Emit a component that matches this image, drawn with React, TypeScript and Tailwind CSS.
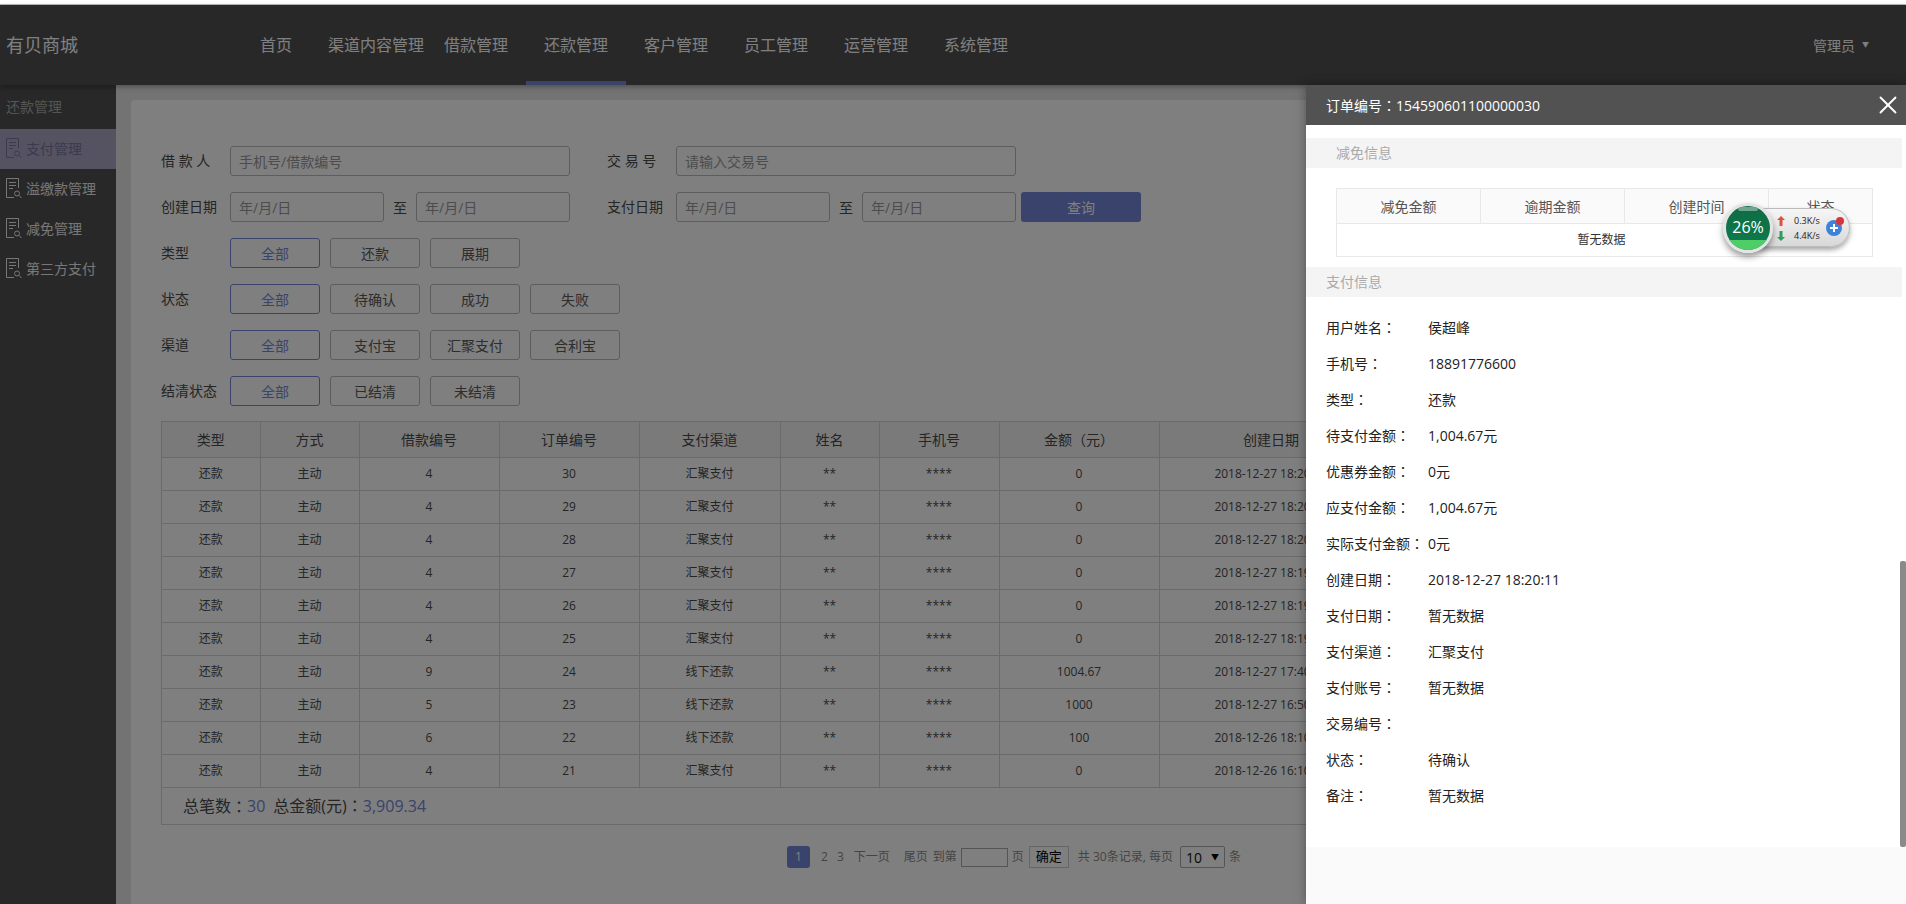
import { X } from 'lucide-react';

const font = { fontFamily: '"Open Sans", "Noto Sans CJK SC", sans-serif' };

const navItems = ['首页', '渠道内容管理', '借款管理', '还款管理', '客户管理', '员工管理', '运营管理', '系统管理'];
const sideItems = ['支付管理', '溢缴款管理', '减免管理', '第三方支付'];

const filters = [
    { label: '类型', options: ['全部', '还款', '展期'] },
    { label: '状态', options: ['全部', '待确认', '成功', '失败'] },
    { label: '渠道', options: ['全部', '支付宝', '汇聚支付', '合利宝'] },
    { label: '结清状态', options: ['全部', '已结清', '未结清'] },
];

const columns = [
    { title: '类型', width: 'w-[98px]' },
    { title: '方式', width: 'w-[99px]' },
    { title: '借款编号', width: 'w-[140px]' },
    { title: '订单编号', width: 'w-[140px]' },
    { title: '支付渠道', width: 'w-[141px]' },
    { title: '姓名', width: 'w-[99px]' },
    { title: '手机号', width: 'w-[120px]' },
    { title: '金额（元）', width: 'w-[160px]' },
    { title: '创建日期', width: 'w-[224px]' },
];

const rows = [
    { loan: 4, order: 30, channel: '汇聚支付', amount: '0', date: '2018-12-27 18:20:11' },
    { loan: 4, order: 29, channel: '汇聚支付', amount: '0', date: '2018-12-27 18:20:02' },
    { loan: 4, order: 28, channel: '汇聚支付', amount: '0', date: '2018-12-27 18:20:00' },
    { loan: 4, order: 27, channel: '汇聚支付', amount: '0', date: '2018-12-27 18:19:41' },
    { loan: 4, order: 26, channel: '汇聚支付', amount: '0', date: '2018-12-27 18:19:20' },
    { loan: 4, order: 25, channel: '汇聚支付', amount: '0', date: '2018-12-27 18:19:02' },
    { loan: 9, order: 24, channel: '线下还款', amount: '1004.67', date: '2018-12-27 17:40:15' },
    { loan: 5, order: 23, channel: '线下还款', amount: '1000', date: '2018-12-27 16:50:33' },
    { loan: 6, order: 22, channel: '线下还款', amount: '100', date: '2018-12-26 18:10:21' },
    { loan: 4, order: 21, channel: '汇聚支付', amount: '0', date: '2018-12-26 16:10:47' },
];

const details = [
    ['用户姓名', '侯超峰'],
    ['手机号', '18891776600'],
    ['类型', '还款'],
    ['待支付金额', '1,004.67元'],
    ['优惠券金额', '0元'],
    ['应支付金额', '1,004.67元'],
    ['实际支付金额', '0元'],
    ['创建日期', '2018-12-27 18:20:11'],
    ['支付日期', '暂无数据'],
    ['支付渠道', '汇聚支付'],
    ['支付账号', '暂无数据'],
    ['交易编号', ''],
    ['状态', '待确认'],
    ['备注', '暂无数据'],
];

// 全角冒号要居中，SC 字体里是偏左的
function Colon() {
    return <span className="font-['Noto_Sans_CJK_TC']">：</span>;
}

function DocIcon() {
    return (
        <svg width="16" height="21" viewBox="0 0 16 21" fill="none" stroke="currentColor" strokeWidth="1">
            <path d="M8 19.5H0.5V0.5H12.5V10" />
            <path d="M3 4.5H10M3 7.5H10M3 10.5H7" />
            <circle cx="11" cy="15.5" r="2.5" />
            <path d="M13 17.5L15.5 20" />
        </svg>
    );
}

function TextInput({ placeholder, width }: { placeholder: string; width: string }) {
    return (
        <input
            type="text"
            placeholder={placeholder}
            className={`${width} h-[30px] rounded-[3px] border border-[#bbb] bg-white px-[8px] text-[14px] placeholder:text-[#999] focus:outline-none`}
        />
    );
}

function NetWidget() {
    return (
        <div className="absolute left-[417px] top-[118px] z-30 flex h-[50px] w-[130px] items-center">
            <div className="absolute left-[22px] top-[5px] h-[39px] w-[105px] rounded-full border border-[#bbb] bg-gradient-to-b from-[#f6f6f6] to-[#d8d8d8] shadow-[0_3px_5px_rgba(0,0,0,.35)]" />
            <div className="relative z-10 flex h-[50px] w-[50px] items-center justify-center overflow-hidden rounded-full border-[3px] border-[#e4e4e4] bg-gradient-to-b from-[#0f6b45] to-[#0c7d4e] pb-[3px] shadow-[0_4px_6px_rgba(0,0,0,.4)]">
                <div className="absolute left-[12px] top-[1px] h-[4px] w-[20px] rounded-full bg-white/40" />
                <div className="absolute bottom-0 left-0 h-[10px] w-full bg-[#4fce68]" />
                <span className="relative text-[16px] leading-none text-white">26%</span>
            </div>
            <div className="relative z-10 ml-[4px] flex flex-col gap-[4px] text-[9px] leading-[11px] text-[#222]">
                <div className="flex items-center gap-[9px]">
                    <svg width="8" height="10" viewBox="0 0 8 10" fill="#e0503c"><path d="M4 0L8 4H5.5V10H2.5V4H0Z" /></svg>
                    <span>0.3K/s</span>
                </div>
                <div className="flex items-center gap-[9px]">
                    <svg width="8" height="10" viewBox="0 0 8 10" fill="#2e9e58"><path d="M4 10L0 6H2.5V0H5.5V6H8Z" /></svg>
                    <span>4.4K/s</span>
                </div>
            </div>
            <div className="relative z-10 ml-[6px] flex h-[16px] w-[16px] items-center justify-center rounded-full bg-[#3f82dc] text-white">
                <svg width="10" height="10" viewBox="0 0 10 10" fill="none" stroke="#fff" strokeWidth="2"><path d="M5 1V9M1 5H9" /></svg>
                <span className="absolute -right-[2px] -top-[3px] h-[8px] w-[8px] rounded-full bg-[#d9343a]" />
            </div>
        </div>
    );
}

export default function App() {
    return (
        <div className="h-[904px] w-[1906px] overflow-hidden bg-white" style={font}>
            <div className="h-[5px] border-b border-[#bbb] bg-white" />
            <div className="relative h-[899px]">
                <header className="relative z-[1] flex h-[80px] items-center bg-[#505050] text-white shadow-[0_2px_5px_rgba(0,0,0,.3)]">
                    <div className="w-[226px] pl-[6px] text-[18px]">有贝商城</div>
                    <nav className="flex h-full flex-1">
                        {navItems.map((item, i) => (
                            <div
                                key={item}
                                className={`flex h-full w-[100px] items-center justify-center whitespace-nowrap border-b-[4px] pt-[4px] text-[16px] ${i === 3 ? 'border-[#7486d8]' : 'border-transparent'}`}
                            >
                                {item}
                            </div>
                        ))}
                    </nav>
                    <div className="flex w-[93px] items-center gap-[7px] text-[14px]">
                        管理员
                        <span className="text-[7px]">▼</span>
                    </div>
                </header>

                <div className="flex h-[819px]">
                    <aside className="w-[116px] shrink-0 bg-[#505050] text-[14px] text-[#eee]">
                        <div className="flex h-[44px] items-center pb-[2px] pl-[6px] text-[#aaa]">还款管理</div>
                        {sideItems.map((item, i) => (
                            <div
                                key={item}
                                className={`flex h-[40px] items-center gap-[4px] pb-[1px] pl-[6px] ${i === 0 ? 'bg-[#aaa6c4] text-[#77749c]' : ''}`}
                            >
                                <DocIcon />
                                <span className="-mt-[1px]">{item}</span>
                            </div>
                        ))}
                    </aside>

                    <main className="flex-1 bg-[#e6e6e6] pl-[15px] pt-[15px]">
                        <div className="h-full rounded-tl-[3px] bg-white pl-[30px] pr-[15px] pt-[46px] text-[14px] text-[#4a4a4a]">
                            <div className="flex h-[30px] items-center">
                                <span className="-mt-[1px] w-[69px] whitespace-pre">借 款 人</span>
                                <TextInput placeholder="手机号/借款编号" width="w-[340px]" />
                                <span className="-mt-[1px] ml-[37px] w-[69px] whitespace-pre">交 易 号</span>
                                <TextInput placeholder="请输入交易号" width="w-[340px]" />
                            </div>
                            <div className="mt-[16px] flex h-[30px] items-center">
                                <span className="-mt-[1px] w-[69px]">创建日期</span>
                                <TextInput placeholder="年/月/日" width="w-[154px]" />
                                <span className="w-[32px] text-center">至</span>
                                <TextInput placeholder="年/月/日" width="w-[154px]" />
                                <span className="-mt-[1px] ml-[37px] w-[69px]">支付日期</span>
                                <TextInput placeholder="年/月/日" width="w-[154px]" />
                                <span className="w-[32px] text-center">至</span>
                                <TextInput placeholder="年/月/日" width="w-[154px]" />
                                <button className="ml-[5px] h-[30px] w-[120px] rounded-[3px] bg-[#7486d8] text-white">查询</button>
                            </div>

                            <div className="mt-[16px] flex flex-col gap-[16px]">
                                {filters.map((filter) => (
                                    <div key={filter.label} className="flex h-[30px] items-center">
                                        <span className="-mt-[2px] w-[69px]">{filter.label}</span>
                                        <div className="flex gap-[10px]">
                                            {filter.options.map((option, i) => (
                                                <button
                                                    key={option}
                                                    className={`h-[30px] w-[90px] rounded-[3px] border ${i === 0 ? 'border-[#7486d8] text-[#7486d8]' : 'border-[#bbb] text-[#5a5a5a]'}`}
                                                >
                                                    {option}
                                                </button>
                                            ))}
                                        </div>
                                    </div>
                                ))}
                            </div>

                            <div className="mt-[15px] border border-[#d4d4d4]">
                                <table className="w-full table-fixed border-collapse text-center">
                                    <colgroup>
                                        {columns.map((col) => (
                                            <col key={col.title} className={col.width} />
                                        ))}
                                        <col />
                                    </colgroup>
                                    <thead>
                                        <tr className="h-[35px] bg-[#f5f5f5]">
                                            {columns.map((col) => (
                                                <th key={col.title} className="border border-t-0 border-l-0 border-[#d4d4d4] font-normal">{col.title}</th>
                                            ))}
                                            <th className="border-b border-[#d4d4d4]" />
                                        </tr>
                                    </thead>
                                    <tbody className="text-[12px]">
                                        {rows.map((row) => (
                                            <tr key={row.order} className="h-[33px]">
                                                <td className="border-r border-b border-[#d4d4d4]">还款</td>
                                                <td className="border-r border-b border-[#d4d4d4]">主动</td>
                                                <td className="border-r border-b border-[#d4d4d4]">{row.loan}</td>
                                                <td className="border-r border-b border-[#d4d4d4]">{row.order}</td>
                                                <td className="border-r border-b border-[#d4d4d4]">{row.channel}</td>
                                                <td className="border-r border-b border-[#d4d4d4]">**</td>
                                                <td className="border-r border-b border-[#d4d4d4]">****</td>
                                                <td className="border-r border-b border-[#d4d4d4]">{row.amount}</td>
                                                <td className="border-r border-b border-[#d4d4d4]">{row.date}</td>
                                                <td className="border-b border-[#d4d4d4]" />
                                            </tr>
                                        ))}
                                    </tbody>
                                </table>
                                <div className="flex h-[36px] items-center pl-[21px] text-[16px]">
                                    总笔数<Colon /><span className="text-[#7486d8]">30</span>
                                    <span className="ml-[8px]">总金额(元)<Colon /></span><span className="text-[#7486d8]">3,909.34</span>
                                </div>
                            </div>

                            <div className="mt-[21px] flex h-[23px] items-center pl-[626px] text-[12px] text-[#888]">
                                <span className="flex h-[22px] w-[23px] items-center justify-center rounded-[3px] bg-[#7486d8] text-white">1</span>
                                <span className="ml-[11px]">2</span>
                                <span className="ml-[9px]">3</span>
                                <span className="ml-[10px]">下一页</span>
                                <span className="ml-[14px]">尾页</span>
                                <span className="ml-[5px]">到第</span>
                                <input type="text" className="ml-[4px] h-[19px] w-[47px] border border-[#aaa] bg-white" />
                                <span className="ml-[4px]">页</span>
                                <button className="ml-[5px] h-[22px] w-[40px] border border-[#ccc] text-[13px] text-black">确定</button>
                                <span className="ml-[9px] whitespace-nowrap">共 30条记录, 每页</span>
                                <div className="ml-[7px] flex h-[22px] w-[45px] items-center justify-between rounded-[2px] border border-[#aaa] bg-white px-[5px] text-[14px] text-[#111]">
                                    10<span className="text-[8px] text-black">▼</span>
                                </div>
                                <span className="ml-[4px]">条</span>
                            </div>
                        </div>
                    </main>
                </div>

                {/* 遮罩 */}
                <div className="absolute inset-0 z-10 bg-black/50" />

                {/* 订单详情 */}
                <div className="absolute bottom-0 right-0 top-[80px] z-20 flex w-[600px] flex-col bg-[#fafafa] shadow-[0_0_10px_rgba(0,0,0,.35)]">
                    <div className="flex h-[40px] shrink-0 items-center justify-between bg-[#525252] pl-[20px] pr-[3px] text-[14px] text-white">
                        <span>订单编号<Colon />154590601100000030</span>
                        <X size={30} strokeWidth={1.5} />
                    </div>
                    <div className="relative h-[722px] bg-white pt-[13px] text-[14px] text-[#333]">
                        <div className="mr-[4px] flex h-[30px] items-center bg-[#f4f4f4] pb-[2px] pl-[30px] text-[#aaa]">减免信息</div>
                        <div className="mx-[30px] mt-[20px] w-[537px] border border-[#e8e8e8]">
                            <div className="flex h-[35px] items-center border-b border-[#e8e8e8] bg-[#fafafa] text-center text-[#555]">
                                <div className="flex h-full w-[144px] items-center justify-center border-r border-[#e8e8e8]">减免金额</div>
                                <div className="flex h-full w-[144px] items-center justify-center border-r border-[#e8e8e8]">逾期金额</div>
                                <div className="flex h-full w-[144px] items-center justify-center border-r border-[#e8e8e8]">创建时间</div>
                                <div className="flex h-full flex-1 items-center justify-center">状态</div>
                            </div>
                            <div className="flex h-[32px] items-center justify-center pr-[6px] text-[12px]">暂无数据</div>
                        </div>
                        <div className="mr-[4px] mt-[10px] flex h-[30px] items-center bg-[#f4f4f4] pb-[2px] pl-[20px] text-[#aaa]">支付信息</div>
                        <div className="mt-[12px] pl-[20px]">
                            {details.map(([label, value]) => (
                                <div key={label} className="flex h-[36px] items-center text-[#222]">
                                    <span className="w-[102px] shrink-0 whitespace-nowrap">{label}<Colon /></span>
                                    <span>{value}</span>
                                </div>
                            ))}
                        </div>
                        <div className="absolute bottom-0 right-0 h-[286px] w-[6px] rounded-[2px] bg-[#8a8a8a]" />
                    </div>
                    <NetWidget />
                </div>
            </div>
        </div>
    );
}
